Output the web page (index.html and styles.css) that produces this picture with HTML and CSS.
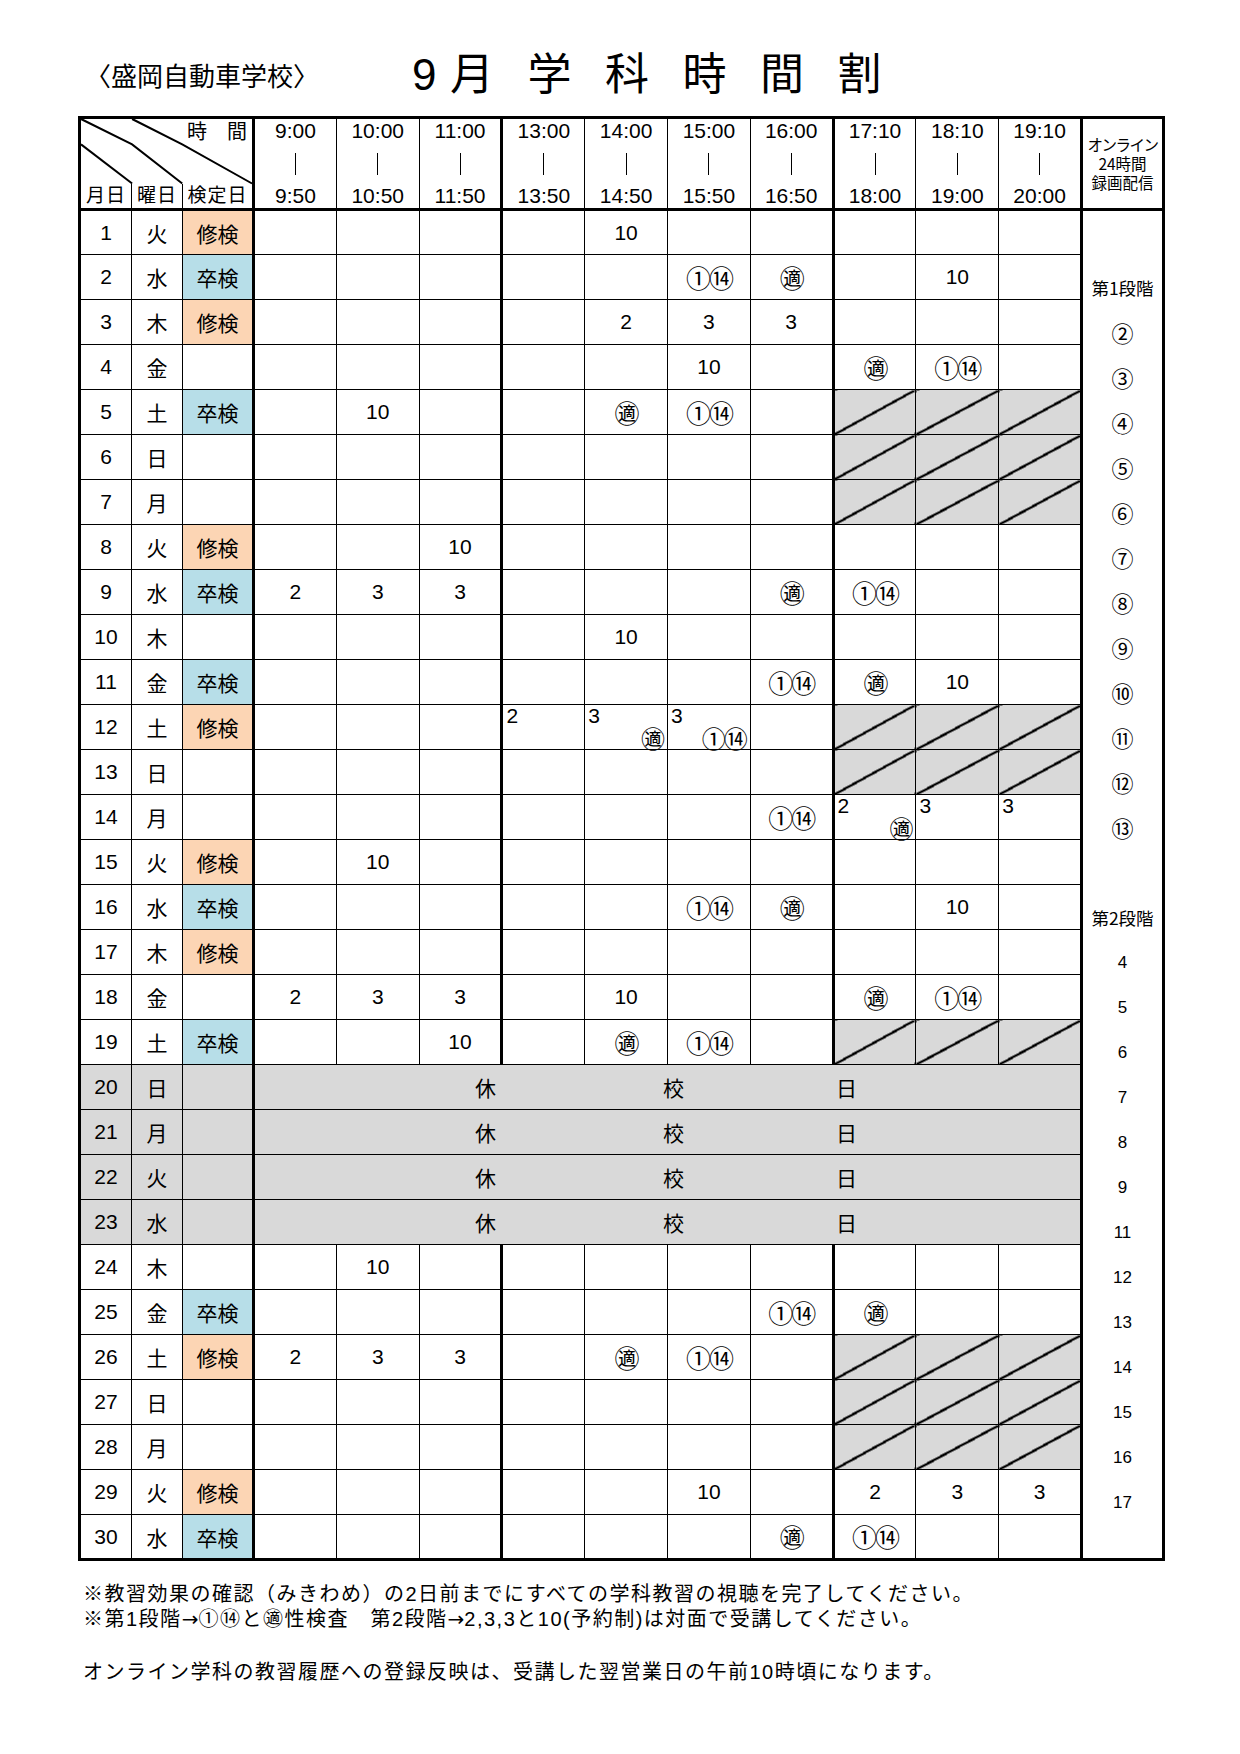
FILE: index.html
```html
<!DOCTYPE html>
<html lang="ja">
<head>
<meta charset="utf-8">
<title>9月 学科時間割</title>
<link rel="stylesheet" href="styles.css">
</head>
<body>
<div class="page">
  <header class="title-row">
    <div class="school">〈盛岡自動車学校〉</div>
    <h1 class="title"><span class="t-num">9</span><span>月</span><span>学</span><span>科</span><span>時</span><span>間</span><span>割</span></h1>
  </header>

  <table class="tt">
    <colgroup>
      <col class="c-day"><col class="c-wd"><col class="c-kt">
      <col class="c-t"><col class="c-t"><col class="c-t"><col class="c-t"><col class="c-t">
      <col class="c-t"><col class="c-t"><col class="c-t"><col class="c-t"><col class="c-t">
      <col class="c-on">
    </colgroup>
    <thead>
      <tr class="ha">
        <th colspan="3" class="diag">
          <svg class="diag-svg" viewBox="0 0 174 66" preserveAspectRatio="none">
            <polyline points="0,26 52,66" />
            <polyline points="0,0 52,26 103,66" />
            <polyline points="52,0 103,26 174,66" />
          </svg>
          <div class="jikan">時　間</div>
        </th>
        <th rowspan="2" class="tm tk"><div class="tmw"><span>9:00</span><span class="bar"></span><span>9:50</span></div></th>
        <th rowspan="2" class="tm"><div class="tmw"><span>10:00</span><span class="bar"></span><span>10:50</span></div></th>
        <th rowspan="2" class="tm"><div class="tmw"><span>11:00</span><span class="bar"></span><span>11:50</span></div></th>
        <th rowspan="2" class="tm tk"><div class="tmw"><span>13:00</span><span class="bar"></span><span>13:50</span></div></th>
        <th rowspan="2" class="tm"><div class="tmw"><span>14:00</span><span class="bar"></span><span>14:50</span></div></th>
        <th rowspan="2" class="tm"><div class="tmw"><span>15:00</span><span class="bar"></span><span>15:50</span></div></th>
        <th rowspan="2" class="tm"><div class="tmw"><span>16:00</span><span class="bar"></span><span>16:50</span></div></th>
        <th rowspan="2" class="tm tk"><div class="tmw"><span>17:10</span><span class="bar"></span><span>18:00</span></div></th>
        <th rowspan="2" class="tm"><div class="tmw"><span>18:10</span><span class="bar"></span><span>19:00</span></div></th>
        <th rowspan="2" class="tm"><div class="tmw"><span>19:10</span><span class="bar"></span><span>20:00</span></div></th>
        <th rowspan="2" class="tm tk online-h"><span class="oh1">オンライン</span><span>24時間</span><span>録画配信</span></th>
      </tr>
      <tr class="hb">
        <th class="lab">月日</th>
        <th class="lab">曜日</th>
        <th class="lab">検定日</th>
      </tr>
    </thead>
    <tbody>
      <tr><td class="d">1</td><td class="w">火</td><td class="k sh">修検</td>
        <td></td><td></td><td></td><td></td><td>10</td><td></td><td></td><td></td><td></td><td></td>
        <td rowspan="30" class="on">
          <div class="on-list">
            <div class="st">第1段階</div>
            <div class="ci">②</div><div class="ci">③</div><div class="ci">④</div><div class="ci">⑤</div>
            <div class="ci">⑥</div><div class="ci">⑦</div><div class="ci">⑧</div><div class="ci">⑨</div>
            <div class="ci">⑩</div><div class="ci">⑪</div><div class="ci">⑫</div><div class="ci">⑬</div>
            <div class="gap"></div>
            <div class="st">第2段階</div>
            <div class="nu">4</div><div class="nu">5</div><div class="nu">6</div><div class="nu">7</div>
            <div class="nu">8</div><div class="nu">9</div><div class="nu">11</div><div class="nu">12</div>
            <div class="nu">13</div><div class="nu">14</div><div class="nu">15</div><div class="nu">16</div>
            <div class="nu">17</div>
          </div>
        </td>
      </tr>
      <tr><td class="d">2</td><td class="w">水</td><td class="k sk">卒検</td>
        <td></td><td></td><td></td><td></td><td></td><td class="cc">①⑭</td><td class="cc">㊜</td><td></td><td>10</td><td></td></tr>
      <tr><td class="d">3</td><td class="w">木</td><td class="k sh">修検</td>
        <td></td><td></td><td></td><td></td><td>2</td><td>3</td><td>3</td><td></td><td></td><td></td></tr>
      <tr><td class="d">4</td><td class="w">金</td><td class="k"></td>
        <td></td><td></td><td></td><td></td><td></td><td>10</td><td></td><td class="cc">㊜</td><td class="cc">①⑭</td><td></td></tr>
      <tr><td class="d">5</td><td class="w">土</td><td class="k sk">卒検</td>
        <td></td><td>10</td><td></td><td></td><td class="cc">㊜</td><td class="cc">①⑭</td><td></td><td class="x"></td><td class="x"></td><td class="x"></td></tr>
      <tr><td class="d">6</td><td class="w">日</td><td class="k"></td>
        <td></td><td></td><td></td><td></td><td></td><td></td><td></td><td class="x"></td><td class="x"></td><td class="x"></td></tr>
      <tr><td class="d">7</td><td class="w">月</td><td class="k"></td>
        <td></td><td></td><td></td><td></td><td></td><td></td><td></td><td class="x"></td><td class="x"></td><td class="x"></td></tr>
      <tr><td class="d">8</td><td class="w">火</td><td class="k sh">修検</td>
        <td></td><td></td><td>10</td><td></td><td></td><td></td><td></td><td></td><td></td><td></td></tr>
      <tr><td class="d">9</td><td class="w">水</td><td class="k sk">卒検</td>
        <td>2</td><td>3</td><td>3</td><td></td><td></td><td></td><td class="cc">㊜</td><td class="cc">①⑭</td><td></td><td></td></tr>
      <tr><td class="d">10</td><td class="w">木</td><td class="k"></td>
        <td></td><td></td><td></td><td></td><td>10</td><td></td><td></td><td></td><td></td><td></td></tr>
      <tr><td class="d">11</td><td class="w">金</td><td class="k sk">卒検</td>
        <td></td><td></td><td></td><td></td><td></td><td></td><td class="cc">①⑭</td><td class="cc">㊜</td><td>10</td><td></td></tr>
      <tr><td class="d">12</td><td class="w">土</td><td class="k sh">修検</td>
        <td></td><td></td><td></td>
        <td class="sp"><div class="spw"><span class="a">2</span><span class="b"></span></div></td>
        <td class="sp"><div class="spw"><span class="a">3</span><span class="b">㊜</span></div></td>
        <td class="sp"><div class="spw"><span class="a">3</span><span class="b">①⑭</span></div></td>
        <td></td><td class="x"></td><td class="x"></td><td class="x"></td></tr>
      <tr><td class="d">13</td><td class="w">日</td><td class="k"></td>
        <td></td><td></td><td></td><td></td><td></td><td></td><td></td><td class="x"></td><td class="x"></td><td class="x"></td></tr>
      <tr><td class="d">14</td><td class="w">月</td><td class="k"></td>
        <td></td><td></td><td></td><td></td><td></td><td></td><td class="cc">①⑭</td>
        <td class="sp"><div class="spw"><span class="a">2</span><span class="b">㊜</span></div></td>
        <td class="sp"><div class="spw"><span class="a">3</span><span class="b"></span></div></td>
        <td class="sp"><div class="spw"><span class="a">3</span><span class="b"></span></div></td></tr>
      <tr><td class="d">15</td><td class="w">火</td><td class="k sh">修検</td>
        <td></td><td>10</td><td></td><td></td><td></td><td></td><td></td><td></td><td></td><td></td></tr>
      <tr><td class="d">16</td><td class="w">水</td><td class="k sk">卒検</td>
        <td></td><td></td><td></td><td></td><td></td><td class="cc">①⑭</td><td class="cc">㊜</td><td></td><td>10</td><td></td></tr>
      <tr><td class="d">17</td><td class="w">木</td><td class="k sh">修検</td>
        <td></td><td></td><td></td><td></td><td></td><td></td><td></td><td></td><td></td><td></td></tr>
      <tr><td class="d">18</td><td class="w">金</td><td class="k"></td>
        <td>2</td><td>3</td><td>3</td><td></td><td>10</td><td></td><td></td><td class="cc">㊜</td><td class="cc">①⑭</td><td></td></tr>
      <tr><td class="d">19</td><td class="w">土</td><td class="k sk">卒検</td>
        <td></td><td></td><td>10</td><td></td><td class="cc">㊜</td><td class="cc">①⑭</td><td></td><td class="x"></td><td class="x"></td><td class="x"></td></tr>
      <tr class="hol"><td class="d">20</td><td class="w">日</td><td class="k"></td>
        <td colspan="10" class="hc"><div class="hw"><span class="h1">休</span><span class="h2">校</span><span class="h3">日</span></div></td></tr>
      <tr class="hol"><td class="d">21</td><td class="w">月</td><td class="k"></td>
        <td colspan="10" class="hc"><div class="hw"><span class="h1">休</span><span class="h2">校</span><span class="h3">日</span></div></td></tr>
      <tr class="hol"><td class="d">22</td><td class="w">火</td><td class="k"></td>
        <td colspan="10" class="hc"><div class="hw"><span class="h1">休</span><span class="h2">校</span><span class="h3">日</span></div></td></tr>
      <tr class="hol"><td class="d">23</td><td class="w">水</td><td class="k"></td>
        <td colspan="10" class="hc"><div class="hw"><span class="h1">休</span><span class="h2">校</span><span class="h3">日</span></div></td></tr>
      <tr><td class="d">24</td><td class="w">木</td><td class="k"></td>
        <td></td><td>10</td><td></td><td></td><td></td><td></td><td></td><td></td><td></td><td></td></tr>
      <tr><td class="d">25</td><td class="w">金</td><td class="k sk">卒検</td>
        <td></td><td></td><td></td><td></td><td></td><td></td><td class="cc">①⑭</td><td class="cc">㊜</td><td></td><td></td></tr>
      <tr><td class="d">26</td><td class="w">土</td><td class="k sh">修検</td>
        <td>2</td><td>3</td><td>3</td><td></td><td class="cc">㊜</td><td class="cc">①⑭</td><td></td><td class="x"></td><td class="x"></td><td class="x"></td></tr>
      <tr><td class="d">27</td><td class="w">日</td><td class="k"></td>
        <td></td><td></td><td></td><td></td><td></td><td></td><td></td><td class="x"></td><td class="x"></td><td class="x"></td></tr>
      <tr><td class="d">28</td><td class="w">月</td><td class="k"></td>
        <td></td><td></td><td></td><td></td><td></td><td></td><td></td><td class="x"></td><td class="x"></td><td class="x"></td></tr>
      <tr><td class="d">29</td><td class="w">火</td><td class="k sh">修検</td>
        <td></td><td></td><td></td><td></td><td></td><td>10</td><td></td><td>2</td><td>3</td><td>3</td></tr>
      <tr><td class="d">30</td><td class="w">水</td><td class="k sk">卒検</td>
        <td></td><td></td><td></td><td></td><td></td><td></td><td class="cc">㊜</td><td class="cc">①⑭</td><td></td><td></td></tr>
    </tbody>
  </table>

  <div class="notes">
    <p>※教習効果の確認（みきわめ）の2日前までにすべての学科教習の視聴を完了してください。</p>
    <p>※第1段階<span class="ar">→</span>①⑭と㊜性検査　第2段階<span class="ar">→</span>2,3,3と10(予約制)は対面で受講してください。</p>
    <p class="n3">オンライン学科の教習履歴への登録反映は、受講した翌営業日の午前10時頃になります。</p>
  </div>
</div>
</body>
</html>
```

FILE: styles.css
```css
html, body {
  margin: 0;
  padding: 0;
  background: #fff;
}

body {
  font-family: "Liberation Sans", "Noto Sans CJK JP", sans-serif;
  color: #000;
}

.page {
  width: 1240px;
  box-sizing: border-box;
  padding: 0 78px;
}

/* ---------- title ---------- */
.title-row {
  height: 116px;
  box-sizing: border-box;
  padding-top: 34px;
  display: flex;
  align-items: center;
}

.school {
  margin-left: 7px;
  width: 327px;
  font-family: "Noto Sans CJK JP", sans-serif;
  font-size: 26px;
  line-height: 1;
  white-space: nowrap;
}

.title {
  margin: 0;
  display: flex;
  gap: 33.5px;
  font-size: 44px;
  font-weight: normal;
  line-height: 1;
}

.t-num {
  margin-right: -20px;
}

/* ---------- table ---------- */
.tt {
  width: 1084px;
  table-layout: fixed;
  border-collapse: collapse;
  border: 3px solid #000;
}

.c-day { width: 52px; }
.c-wd { width: 51px; }
.c-kt { width: 71px; }
.c-t { width: 82.8px; }
.c-on { width: 82px; }

.tt th,
.tt td {
  border: 1px solid #000;
  padding: 0;
  text-align: center;
  vertical-align: middle;
  font-weight: normal;
}

/* header */
.ha { height: 66px; }
.hb { height: 26px; }

.diag {
  position: relative;
  border-bottom: none !important;
  vertical-align: top !important;
}

.diag-svg {
  position: absolute;
  left: 0;
  top: 0;
  width: 100%;
  height: 100%;
  overflow: visible;
}

.diag-svg polyline {
  fill: none;
  stroke: #000;
  stroke-width: 2;
  vector-effect: non-scaling-stroke;
}

.jikan {
  position: relative;
  text-align: right;
  padding-right: 5px;
  font-size: 20px;
  line-height: 26px;
}

.hb th {
  border-top: none;
  border-bottom: 3px solid #000;
}

.lab {
  font-size: 19px;
  line-height: 22px;
  letter-spacing: 1px;
  white-space: nowrap;
}

.tm {
  border-bottom: 3px solid #000 !important;
  vertical-align: top !important;
}

.tk {
  border-left: 3px solid #000 !important;
}

.tmw {
  height: 89px;
  display: flex;
  flex-direction: column;
  align-items: center;
  justify-content: space-between;
  font-size: 21px;
}

.tmw span {
  line-height: 24px;
}

.tmw .bar {
  display: block;
  width: 1px;
  height: 22px;
  background: #000;
}

.online-h {
  vertical-align: middle !important;
  font-family: "Noto Sans CJK JP", sans-serif;
  font-size: 15.5px;
  line-height: 19px;
}

.online-h span {
  display: block;
  white-space: nowrap;
}

.oh1 {
  letter-spacing: -1.5px;
}

/* body */
.tt tbody tr {
  height: 45px;
}

.tt tbody td {
  font-size: 21px;
}

.tt tbody td:nth-child(4),
.tt tbody td:nth-child(7),
.tt tbody td:nth-child(11) {
  border-left: 3px solid #000;
}

.tt tbody td.on {
  border-left: 3px solid #000;
  vertical-align: top;
  background: #fff;
}

.d {
  font-size: 21px;
}

.w,
.k {
  font-size: 22px;
}

.sh {
  background: #fcd5b4;
}

.sk {
  background: #b7dee8;
}

.tt tbody td.cc {
  font-family: "Noto Sans CJK JP", sans-serif;
  font-size: 25px;
  line-height: 1;
  letter-spacing: -2px;
}

.x {
  background: linear-gradient(to top left,
    #d9d9d9 calc(50% - 1.2px),
    #000 calc(50% - 1.2px),
    #000 calc(50% + 1.2px),
    #d9d9d9 calc(50% + 1.2px));
}

.tt tbody td.sp {
  vertical-align: top;
  padding: 1px 3px 0 3px;
}

.spw {
  height: 43px;
  display: flex;
  flex-direction: column;
  justify-content: space-between;
}

.spw .a {
  align-self: flex-start;
  line-height: 20px;
}

.spw .b {
  align-self: flex-end;
  font-family: "Noto Sans CJK JP", sans-serif;
  font-size: 24px;
  line-height: 22px;
  letter-spacing: -2px;
  margin-right: 1px;
}

/* holidays */
.hol td {
  background: #d9d9d9;
}

.hw {
  display: flex;
  font-family: "Noto Sans CJK JP", sans-serif;
  font-size: 21px;
  line-height: 24px;
}

.h1 { margin-left: 220px; }
.h2 { margin-left: 167px; }
.h3 { margin-left: 152px; }

/* online list */
.on-list {
  padding-top: 54px;
}

.on-list > div {
  height: 45px;
  line-height: 45px;
  text-align: center;
}

.on-list .st {
  font-family: "Noto Sans CJK JP", sans-serif;
  font-size: 17.5px;
}

.on-list .ci {
  font-family: "Noto Sans CJK JP", sans-serif;
  font-size: 22px;
}

.on-list .nu {
  font-size: 17px;
}

/* ---------- notes ---------- */
.notes {
  margin-top: 21px;
  padding-left: 5px;
  font-family: "Liberation Sans", "Noto Sans CJK JP", sans-serif;
  font-size: 20px;
  letter-spacing: 1.5px;
  line-height: 25px;
  white-space: nowrap;
}

.notes p {
  margin: 0;
}

.notes .ar {
  font-family: "DejaVu Sans", sans-serif;
  letter-spacing: 0;
}

.notes .n3 {
  margin-top: 28px;
}
```
